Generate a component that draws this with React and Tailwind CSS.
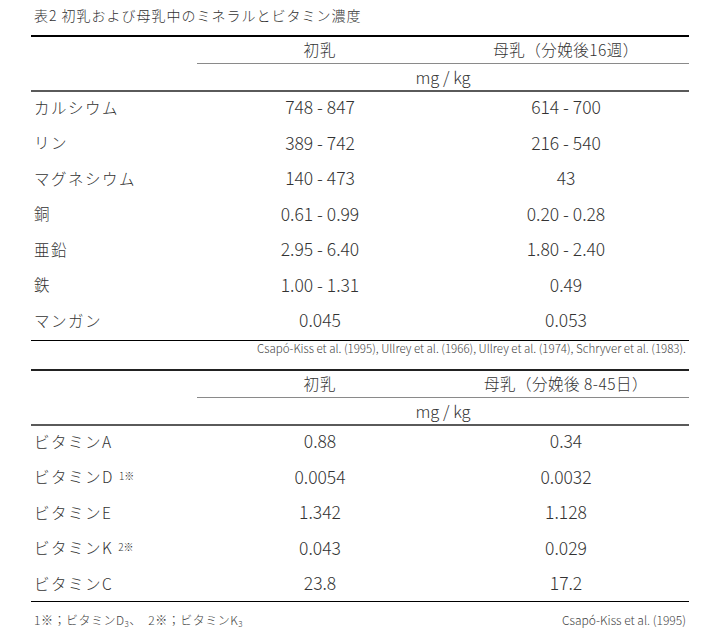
import React from "react";

const minerals = [
  ["カルシウム", "748 - 847", "614 - 700"],
  ["リン", "389 - 742", "216 - 540"],
  ["マグネシウム", "140 - 473", "43"],
  ["銅", "0.61 - 0.99", "0.20 - 0.28"],
  ["亜鉛", "2.95 - 6.40", "1.80 - 2.40"],
  ["鉄", "1.00 - 1.31", "0.49"],
  ["マンガン", "0.045", "0.053"],
];

const vitamins = [
  ["ビタミンA", null, "0.88", "0.34"],
  ["ビタミンD", "1※", "0.0054", "0.0032"],
  ["ビタミンE", null, "1.342", "1.128"],
  ["ビタミンK", "2※", "0.043", "0.029"],
  ["ビタミンC", null, "23.8", "17.2"],
];

function TableHead({ milk }) {
  return (
    <>
      <div className="grid grid-cols-[166px_246px_246px] h-[26px] items-center">
        <div />
        <div className="text-center tracking-[1px]">初乳</div>
        <div className="text-center tracking-[0.5px]">{milk}</div>
      </div>
      <div className="ml-[166px] h-px bg-[#8a8a8a]" />
      <div className="ml-[166px] h-[26px] flex items-center justify-center text-[16.5px]">mg / kg</div>
      <div className="h-[2px] bg-[#5a5a5a]" />
    </>
  );
}

function Row({ label, sup, a, b }) {
  return (
    <div className="grid grid-cols-[166px_246px_246px] h-[35.5px] items-center pb-[5px]">
      <div className="pl-[3px] tracking-[1.5px]">
        {label}
        {sup && <sup className="ml-[5px] text-[10px] relative -top-[3px] tracking-normal">{sup}</sup>}
      </div>
      <div className="text-center text-[17.5px]">{a}</div>
      <div className="text-center text-[17.5px]">{b}</div>
    </div>
  );
}

export default function App() {
  return (
    <div
      className="w-[720px] h-[628px] bg-white text-[#333] text-[15.5px] font-light overflow-hidden"
      style={{ fontFamily: '"Noto Sans CJK JP", "Noto Sans", sans-serif' }}
    >
      <div className="pl-[34px] pt-[5px] h-[35px] text-[14px] tracking-[1px]">
        表2 初乳および母乳中のミネラルとビタミン濃度
      </div>
      <div className="ml-[31px] w-[658px]">
        <div className="h-[2px] bg-black" />
        <TableHead milk="母乳（分娩後16週）" />
        {minerals.map((r) => (
          <Row key={r[0]} label={r[0]} a={r[1]} b={r[2]} />
        ))}
        <div className="h-[1.5px] bg-black -mt-[1px]" />
        <div className="text-right text-[11.5px] leading-[14px] pr-[3px] text-[#444]">
          Csapó-Kiss et al. (1995), Ullrey et al. (1966), Ullrey et al. (1974), Schryver et al. (1983).
        </div>
        <div className="h-[2px] bg-[#222] mt-[14px]" />
        <TableHead milk="母乳（分娩後 8-45日）" />
        {vitamins.map((r) => (
          <Row key={r[0]} label={r[0]} sup={r[1]} a={r[2]} b={r[3]} />
        ))}
        <div className="h-[1.5px] bg-black -mt-[3px]" />
        <div className="flex justify-between items-center h-[36px] text-[12px] text-[#444]">
          <div className="pl-[3px] tracking-[0.5px]">
            1※；ビタミンD<sub className="text-[8px]">3</sub>、　2※；ビタミンK<sub className="text-[8px]">3</sub>
          </div>
          <div className="pr-[3px]">Csapó-Kiss et al. (1995)</div>
        </div>
      </div>
    </div>
  );
}
